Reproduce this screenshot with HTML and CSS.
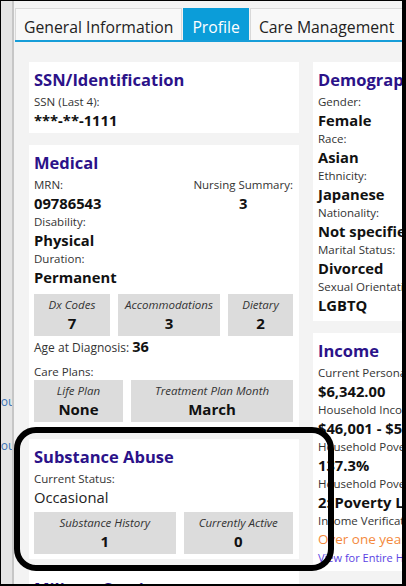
FILE: index.html
```html
<!DOCTYPE html>
<html lang="en">
<head>
    <meta charset="UTF-8">
    <meta name="viewport" content="width=device-width, initial-scale=1.0">
    <title>Client Profile</title>
    <link rel="stylesheet" href="styles.css">
</head>
<body>
    <div class="frame">
        <div class="side">
            <a href="#">Household</a>
            <a href="#">Household</a>
        </div>

        <div class="main">
            <div class="tabs">
                <div class="tab">General Information</div>
                <div class="tab active">Profile</div>
                <div class="tab">Care Management</div>
                <div class="tab">Documents</div>
            </div>

            <div class="panes">
                <div class="col">
                    <div class="card card-ssn">
                        <h2>SSN/Identification</h2>
                        <div class="label">SSN (Last 4):</div>
                        <div class="value">***-**-1111</div>
                    </div>

                    <div class="card">
                        <h2>Medical</h2>
                        <div class="split">
                            <div>
                                <div class="label">MRN:</div>
                                <div class="value">09786543</div>
                            </div>
                            <div class="centered">
                                <div class="label">Nursing Summary:</div>
                                <div class="value">3</div>
                            </div>
                        </div>
                        <div class="label">Disability:</div>
                        <div class="value">Physical</div>
                        <div class="label">Duration:</div>
                        <div class="value">Permanent</div>

                        <div class="stats stats-med">
                            <div class="stat">
                                <div class="stat-label">Dx Codes</div>
                                <div class="stat-value">7</div>
                            </div>
                            <div class="stat">
                                <div class="stat-label">Accommodations</div>
                                <div class="stat-value">3</div>
                            </div>
                            <div class="stat">
                                <div class="stat-label">Dietary</div>
                                <div class="stat-value">2</div>
                            </div>
                        </div>

                        <div class="age">Age at Diagnosis: <b>36</b></div>
                        <div class="label plans">Care Plans:</div>

                        <div class="stats stats-plans">
                            <div class="stat">
                                <div class="stat-label">Life Plan</div>
                                <div class="stat-value">None</div>
                            </div>
                            <div class="stat">
                                <div class="stat-label">Treatment Plan Month</div>
                                <div class="stat-value">March</div>
                            </div>
                        </div>
                    </div>

                    <div class="card">
                        <h2>Substance Abuse</h2>
                        <div class="label">Current Status:</div>
                        <div class="status">Occasional</div>
                        <div class="stats stats-sub">
                            <div class="stat">
                                <div class="stat-label">Substance History</div>
                                <div class="stat-value">1</div>
                            </div>
                            <div class="stat">
                                <div class="stat-label">Currently Active</div>
                                <div class="stat-value">0</div>
                            </div>
                        </div>
                    </div>

                    <div class="card">
                        <h2>Military Service</h2>
                        <div class="label">Veteran:</div>
                        <div class="value">No</div>
                    </div>
                </div>

                <div class="col">
                    <div class="card">
                        <h2>Demographics</h2>
                        <div class="label">Gender:</div>
                        <div class="value">Female</div>
                        <div class="label">Race:</div>
                        <div class="value">Asian</div>
                        <div class="label">Ethnicity:</div>
                        <div class="value">Japanese</div>
                        <div class="label">Nationality:</div>
                        <div class="value">Not specified</div>
                        <div class="label">Marital Status:</div>
                        <div class="value">Divorced</div>
                        <div class="label">Sexual Orientation:</div>
                        <div class="value">LGBTQ</div>
                    </div>

                    <div class="card">
                        <h2>Income</h2>
                        <div class="label">Current Personal Income:</div>
                        <div class="value">$6,342.00</div>
                        <div class="label">Household Income:</div>
                        <div class="value">$46,001 - $55,000</div>
                        <div class="label">Household Poverty Level:</div>
                        <div class="value">137.3%</div>
                        <div class="label">Household Poverty Category:</div>
                        <div class="value">2: Poverty Level 2</div>
                        <div class="label">Income Verification:</div>
                        <div class="verified">Over one year ago</div>
                        <a class="more" href="#">View for Entire Household</a>
                    </div>
                </div>
            </div>
        </div>

        <!-- highlight ring drawn over the substance abuse card -->
        <div class="ring"></div>
    </div>
</body>
</html>
```

FILE: styles.css
```css
* {
    box-sizing: border-box;
}

body {
    margin: 0;
    font-family: "Open Sans", "Noto Sans", sans-serif;
    color: #222;
}

.frame {
    position: relative;
    display: flex;
    width: 406px;
    height: 586px;
    overflow: hidden;
    background: #f3f3f3;
    border-style: solid;
    border-color: #000;
    border-width: 1px 4px 2px 1px;
}

/* collapsed nav on the left, only a sliver shows */
.side {
    flex: none;
    width: 13px;
    padding-top: 393px;
    overflow: hidden;
    background: #e4e4e4;
    border-right: 2px solid #c6c6c6;
}

.side a {
    display: block;
    margin-left: -9px;
    white-space: nowrap;
    font-size: 12px;
    line-height: 16px;
    color: #3a72b4;
    text-decoration: none;
}

.side a + a {
    margin-top: 28px;
}

.main {
    flex: 1;
    min-width: 0;
    display: flex;
    flex-direction: column;
    padding: 7px 0 0 1px;
    overflow: hidden;
}

.tabs {
    display: flex;
    flex: none;
    height: 34px;
    border-bottom: 2px solid #169dd8;
}

.tab {
    display: flex;
    align-items: center;
    flex: none;
    padding: 4px 8px 0;
    margin-right: 1px;
    font-size: 15.75px;
    white-space: nowrap;
    color: #222;
    background: #f8f8f8;
    border: 1px solid #d9d9d9;
    border-bottom: none;
}

.tab.active {
    background: #0b9dd9;
    border-color: #0b9dd9;
    color: #fff;
}

.panes {
    display: flex;
    gap: 14px;
    padding: 20px 0 0 14px;
}

.col {
    flex: none;
    width: 270px;
    display: flex;
    flex-direction: column;
    gap: 12px;
}

.card {
    background: #fff;
    padding: 7px 6px 5px 5px;
}

.card h2 {
    margin: 0 0 3px;
    font-size: 16.5px;
    line-height: 22px;
    font-weight: 700;
    color: #2b1289;
}

.card-ssn {
    padding-bottom: 2px;
}

.label {
    font-size: 11.5px;
    line-height: 16px;
    color: #333;
}

.value {
    font-size: 14.75px;
    line-height: 21px;
    font-weight: 700;
    color: #111;
}

.split {
    display: flex;
    justify-content: space-between;
}

.centered {
    text-align: center;
}

.stats {
    display: grid;
    gap: 8px;
    margin-top: 6px;
}

.stats-med {
    grid-template-columns: 76fr 102fr 65fr;
}

.stats-plans {
    grid-template-columns: 89fr 162fr;
}

.stats-sub {
    grid-template-columns: 141fr 109fr;
}

.stat {
    background: #dcdcdc;
    text-align: center;
    padding: 3px 2px 3px;
}

.stat-label {
    font-size: 11.5px;
    line-height: 16px;
    font-style: italic;
    color: #333;
}

.stat-value {
    font-size: 15px;
    line-height: 20px;
    font-weight: 700;
    color: #111;
}

.age {
    margin-top: 2px;
    font-size: 12px;
    line-height: 17px;
    color: #333;
}

.age b {
    font-size: 14.5px;
    color: #111;
}

.plans {
    margin-top: 8px;
}

.stats-plans {
    margin-top: 0;
}

.status {
    font-size: 14.75px;
    line-height: 20px;
    color: #222;
}

.stats-sub {
    margin-top: 5px;
}

.verified {
    font-size: 13.5px;
    line-height: 20px;
    color: #f4893c;
}

.more {
    display: block;
    font-size: 11px;
    line-height: 17px;
    color: #5a3fe3;
    text-decoration: none;
    white-space: nowrap;
}

.ring {
    position: absolute;
    left: 13px;
    top: 426px;
    width: 320px;
    height: 144px;
    border: 6px solid #000;
    border-radius: 22px;
    pointer-events: none;
}
```
